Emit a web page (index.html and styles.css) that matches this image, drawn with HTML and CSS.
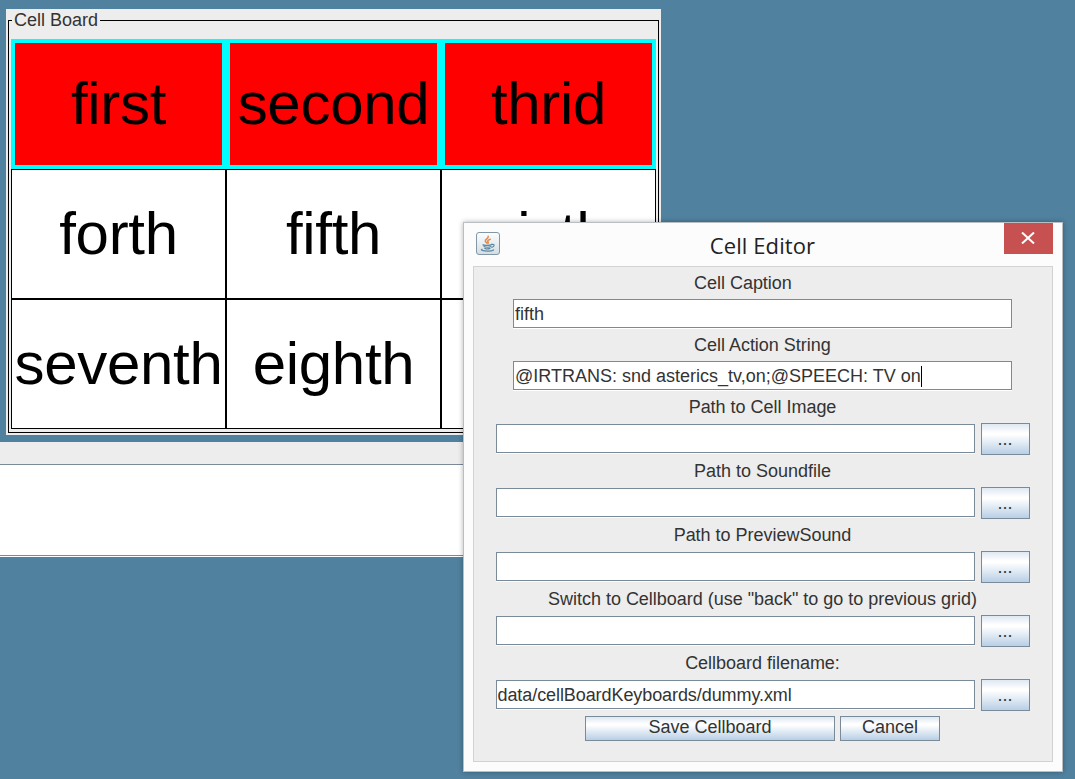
FILE: index.html
```html
<!DOCTYPE html>
<html lang="en">
<head>
<meta charset="utf-8">
<title>Cell Editor</title>
<link rel="stylesheet" href="styles.css">
</head>
<body>
<main class="desktop">
  <section class="board">
    <div class="board-frame">
      <h2 class="board-title">Cell Board</h2>
      <div class="grid">
        <div class="cell active"><span>first</span></div>
        <div class="cell active"><span>second</span></div>
        <div class="cell active"><span>thrid</span></div>
        <div class="cell"><span>forth</span></div>
        <div class="cell"><span>fifth</span></div>
        <div class="cell"><span>sixth</span></div>
        <div class="cell"><span>seventh</span></div>
        <div class="cell"><span>eighth</span></div>
        <div class="cell"></div>
      </div>
    </div>
  </section>
  <section class="console">
    <div class="console-head"></div>
    <div class="console-body"></div>
  </section>

  <section class="dialog">
    <header class="titlebar">
      <svg class="java" viewBox="0 0 24 24">
        <defs>
          <linearGradient id="tile" x1="0" y1="0" x2="0" y2="1">
            <stop offset="0" stop-color="#fdfefe"/>
            <stop offset="1" stop-color="#d3dde4"/>
          </linearGradient>
        </defs>
        <rect x="0.5" y="0.5" width="23" height="22" rx="2.5" fill="url(#tile)" stroke="#8297a6"/>
        <g fill="none" stroke-linecap="round">
          <path d="M12.200 4.300C13 6.400 8.800 7.200 9.300 9.200C9.500 10 10.600 10.300 10.800 11M14.300 7.300C12 8 11.200 9 12 9.800C12.500 10.400 12.300 10.800 12 11.200" stroke="#e8894a" stroke-width="1.500"/>
          <path d="M7.200 12.600C5.800 13.700 14.500 13.600 15.600 12.500M8 14.600C9.500 15.500 13.500 15.400 14.800 14.600M8.800 16.400C10.500 17 12.800 17 14 16.400M15.800 12.400C19 11.700 18.800 14.600 15.800 15.400M6 17.200C2.500 18.800 14.500 20 17.600 17.900" stroke="#5f879f" stroke-width="1.200"/>
        </g>
      </svg>
      <h1 class="title">Cell Editor</h1>
      <button class="close" aria-label="Close">
        <svg viewBox="0 0 14 12"><path d="M1 0.500L13 11.500M13 0.500L1 11.500" stroke="#fff" stroke-width="2" fill="none"/></svg>
      </button>
    </header>
    <div class="client">
      <div class="label"><span class="label-box">Cell Caption</span></div>
      <div class="field wide">fifth</div>
      <div class="label"><span class="label-box">Cell Action String</span></div>
      <div class="field wide">@IRTRANS: snd asterics_tv,on;@SPEECH: TV on<i class="caret"></i></div>
      <div class="label">Path to Cell Image</div>
      <div class="row"><div class="field"></div><button class="btn browse">...</button></div>
      <div class="label">Path to Soundfile</div>
      <div class="row"><div class="field"></div><button class="btn browse">...</button></div>
      <div class="label">Path to PreviewSound</div>
      <div class="row"><div class="field"></div><button class="btn browse">...</button></div>
      <div class="label">Switch to Cellboard (use "back" to go to previous grid)</div>
      <div class="row"><div class="field"></div><button class="btn browse">...</button></div>
      <div class="label">Cellboard filename:</div>
      <div class="row"><div class="field path">data/cellBoardKeyboards/dummy.xml</div><button class="btn browse">...</button></div>
      <div class="actions"><button class="btn save">Save Cellboard</button><button class="btn cancel">Cancel</button></div>
    </div>
  </section>
</main>
</body>
</html>
```
FILE: styles.css
```css
* { box-sizing: border-box; }

body {
  margin: 0;
  background: #50819f;
  color: #333;
  font: 18px/22px "Liberation Sans", Arial, sans-serif;
}

h1, h2 { margin: 0; font-weight: normal; }

button { margin: 0; font: inherit; color: inherit; }

.desktop {
  position: relative;
  width: 1075px;
  height: 779px;
  padding-top: 9px;
  overflow: hidden;
}

/* Cell board */
.board {
  width: 655px;
  height: 426px;
  margin-left: 6px;
  padding: 11px 2px 2px;
  background: #ededed;
}

.board-frame {
  height: 413px;
  border: 1px solid #000;
  padding: 0 2px;
  display: flex;
  flex-direction: column;
}

.board-title {
  align-self: flex-start;
  height: 22px;
  margin: -12px 0 8px 1px;
  padding: 0 2px;
  background: #ededed;
  font-size: 18px;
  line-height: 22px;
  white-space: nowrap;
}

.grid {
  width: 645px;
  display: grid;
  grid-template-columns: repeat(3, 215px);
  grid-auto-rows: 130px;
}

.cell {
  display: flex;
  align-items: center;
  justify-content: center;
  border: 1px solid #000;
  background: #fff;
  color: #000;
  font-size: 60px;
  line-height: 70px;
  letter-spacing: -0.3px;
}

.cell.active {
  border: 4px solid #0ff;
  background: #f00;
}

/* Text pane below the board */
.console {
  width: 600px;
  margin-top: 7px;
}

.console-head { height: 22px; background: #ededed; }

.console-body {
  height: 93px;
  background: #fff;
  border-top: 1px solid #7a8a99;
  border-bottom: 1px solid #fff;
  box-shadow: inset 0 -1px #7a8a99;
}

/* Dialog window */
.dialog {
  position: absolute;
  left: 463px;
  top: 222px;
  width: 600px;
  height: 550px;
  padding: 0 9px 9px;
  background: #fcfcfc;
  border: 1px solid #b9bec2;
  box-shadow: 0 0 5px rgba(0, 0, 0, 0.3);
}

.titlebar {
  height: 43px;
  display: grid;
  grid-template-columns: 49px 1fr 49px;
  align-items: start;
}

.java { width: 24px; height: 24px; margin: 9px 0 0 3px; display: block; }

.title {
  padding: 6px 1px 0 0;
  color: #222;
  font: 22px/32px "Open Sans", "Noto Sans", sans-serif;
  letter-spacing: 0.1px;
  text-align: center;
}

.close {
  width: 49px;
  height: 31px;
  padding: 0 1px 1px 0;
  border: 0;
  background: #c75050;
  display: flex;
  align-items: center;
  justify-content: center;
}

.close svg { width: 14px; height: 12px; }

.client {
  height: 496px;
  padding: 5px 1px 0 0;
  border: 1px solid #d2d2d2;
  background: #ededed;
  display: flex;
  flex-direction: column;
  align-items: center;
}

.label {
  height: 22px;
  margin-bottom: 5px;
  white-space: nowrap;
  text-align: center;
  letter-spacing: -0.02px;
}

.label-box { display: block; width: 137px; text-align: left; }

.field {
  width: 479px;
  height: 29px;
  padding: 0 1px;
  background: #fff;
  border: 1px solid #7a8a99;
  box-shadow: 0 1px #fff;
  line-height: 28px;
  white-space: nowrap;
}

.field.wide { width: 499px; margin-bottom: 6px; }

.field.path { letter-spacing: -0.08px; }

.caret {
  display: inline-block;
  width: 1px;
  height: 21px;
  vertical-align: -5px;
  background: #000;
}

.row {
  display: flex;
  align-items: flex-start;
  gap: 6px;
  margin-bottom: 5px;
}

.row .field { margin-top: 1px; }

.btn {
  height: 32px;
  padding: 0;
  border: 1px solid #7a8a99;
  background: linear-gradient(#dde8f3 0%, #fff 30%, #fff 35%, #b8cfe5 100%);
}

.browse { width: 49px; }

.actions { display: flex; gap: 5px; }

.actions .btn { height: 25px; padding-bottom: 2px; line-height: 21px; }

.save { width: 250px; }

.cancel { width: 100px; }
```
